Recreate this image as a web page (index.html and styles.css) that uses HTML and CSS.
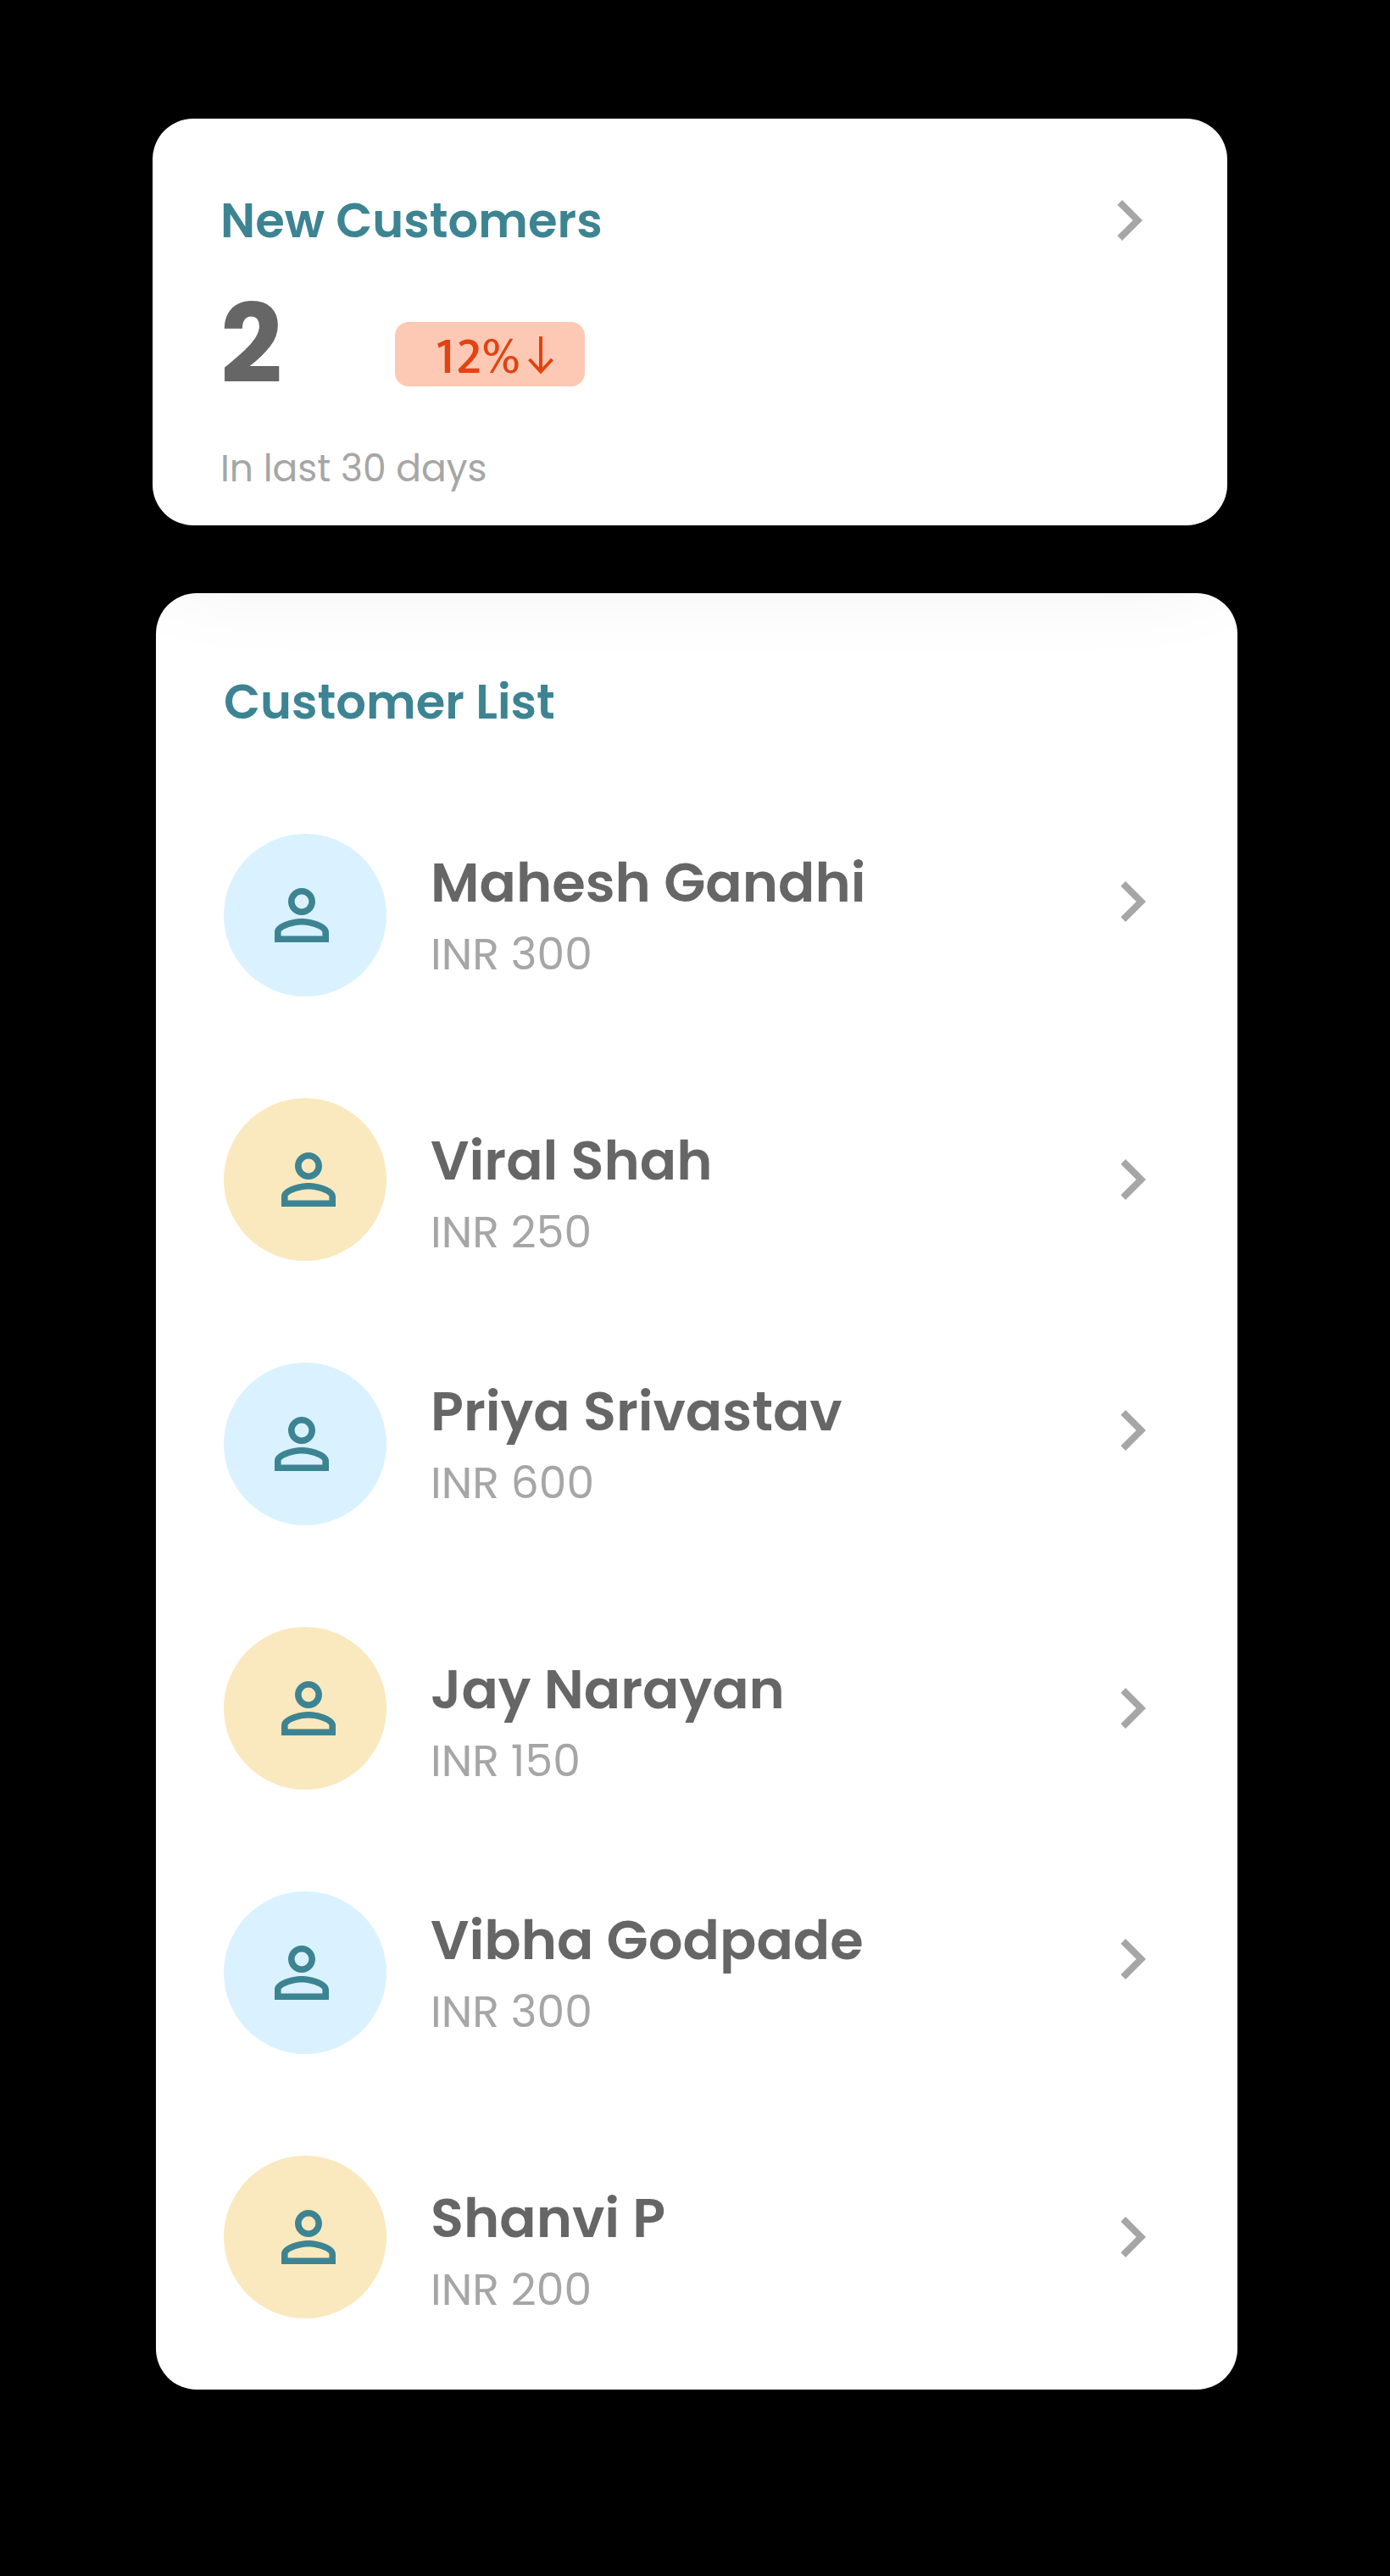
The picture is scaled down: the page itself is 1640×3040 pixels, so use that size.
FILE: index.html
```html
<!DOCTYPE html>
<html lang="en">
<head>
<meta charset="utf-8">
<title>Customers</title>
<link rel="stylesheet" href="styles.css">
</head>
<body>
<svg class="sprite" aria-hidden="true">
  <symbol id="chevron" viewBox="0 0 24 24"><path d="M10 6 8.59 7.41 13.17 12l-4.58 4.59L10 18l6-6z"/></symbol>
  <symbol id="person" viewBox="0 0 24 24"><path d="M12 5.9a2.1 2.1 0 1 1 0 4.2 2.1 2.1 0 0 1 0-4.2m0 9c2.97 0 6.1 1.46 6.1 2.1v1.1H5.9V17c0-.64 3.13-2.1 6.1-2.1M12 4C9.79 4 8 5.79 8 8s1.79 4 4 4 4-1.79 4-4-1.79-4-4-4zm0 9c-2.67 0-8 1.34-8 4v3h16v-3c0-2.66-5.33-4-8-4z"/></symbol>
</svg>
<main class="page">
  <section class="card summary">
    <header class="summary-header">
      <h2 class="title">New Customers</h2>
      <svg class="chevron"><use href="#chevron"/></svg>
    </header>
    <div class="summary-value">
      <span class="count">2</span>
      <span class="badge">
        <span class="badge-text">12<span class="badge-percent">%</span></span>
        <svg class="badge-arrow" viewBox="0 0 30 45"><path d="M15 0v42M1.500 27 15 41.500 28.500 27"/></svg>
      </span>
    </div>
    <p class="period">In last 30 days</p>
  </section>

  <section class="card customers">
    <h2 class="title">Customer List</h2>
    <ul class="list">
      <li class="row">
        <span class="avatar"><svg class="person"><use href="#person"/></svg></span>
        <div class="details"><div class="name">Mahesh Gandhi</div><div class="amount">INR 300</div></div>
        <svg class="chevron"><use href="#chevron"/></svg>
      </li>
      <li class="row row-alt">
        <span class="avatar"><svg class="person"><use href="#person"/></svg></span>
        <div class="details"><div class="name">Viral Shah</div><div class="amount">INR 250</div></div>
        <svg class="chevron"><use href="#chevron"/></svg>
      </li>
      <li class="row">
        <span class="avatar"><svg class="person"><use href="#person"/></svg></span>
        <div class="details"><div class="name">Priya Srivastav</div><div class="amount">INR 600</div></div>
        <svg class="chevron"><use href="#chevron"/></svg>
      </li>
      <li class="row row-alt">
        <span class="avatar"><svg class="person"><use href="#person"/></svg></span>
        <div class="details"><div class="name">Jay Narayan</div><div class="amount">INR 150</div></div>
        <svg class="chevron"><use href="#chevron"/></svg>
      </li>
      <li class="row">
        <span class="avatar"><svg class="person"><use href="#person"/></svg></span>
        <div class="details"><div class="name">Vibha Godpade</div><div class="amount">INR 300</div></div>
        <svg class="chevron"><use href="#chevron"/></svg>
      </li>
      <li class="row row-alt">
        <span class="avatar"><svg class="person"><use href="#person"/></svg></span>
        <div class="details"><div class="name">Shanvi P</div><div class="amount">INR 200</div></div>
        <svg class="chevron"><use href="#chevron"/></svg>
      </li>
    </ul>
  </section>
</main>
</body>
</html>
```
FILE: styles.css
```css
* { box-sizing: border-box; margin: 0; padding: 0; }

body {
  background: #000;
  font-family: Poppins, Inter, "Liberation Sans", sans-serif;
}

.sprite { display: none; }

.page {
  display: flex;
  flex-direction: column;
  gap: 80px;
  width: 1640px;
  height: 3040px;
  padding: 140px 180px 0;
}

.card { background: #fff; border-radius: 48px; }

.summary {
  position: relative;
  z-index: 1;
  width: 1268px;
  height: 480px;
  padding: 72px 68px 0 80px;
  box-shadow: 0 48px 120px rgba(0, 0, 0, 0.09);
}

.summary-header { display: flex; align-items: center; justify-content: space-between; }

.title { color: #3d8493; font-size: 56px; font-weight: 600; line-height: 86px; white-space: nowrap; }
.summary-header .title { padding-top: 1px; }

.chevron { flex: none; width: 96px; height: 96px; fill: #a6a6a6; }

.summary-value { display: flex; height: 144px; margin-top: 21px; }

.count {
  width: 206px;
  padding-top: 6px;
  color: #666;
  font-size: 128px;
  font-weight: 700;
  line-height: 144px;
}

.badge {
  display: flex;
  width: 224px;
  height: 76px;
  margin-top: 51px;
  padding: 0 37px 0 47px;
  border-radius: 16px;
  background: #fdc9b5;
  color: #e24310;
}
.badge-text {
  padding-top: 4px;
  font-family: Mukta, "Open Sans", sans-serif;
  font-size: 62px;
  font-weight: 500;
  line-height: 76px;
  white-space: nowrap;
}
.badge-percent { margin-left: 1px; font-size: 54px; line-height: 1; }
.badge-arrow {
  flex: none;
  width: 30px;
  height: 45px;
  margin: 17px 0 0 auto;
  fill: none;
  stroke: #e24310;
  stroke-width: 4;
}

.period { margin-top: 48px; color: #a6a6a6; font-size: 44px; line-height: 64px; }

.customers { width: 1276px; height: 2120px; margin-left: 4px; padding: 86px 76px 0 80px; }

.list { display: flex; flex-direction: column; gap: 120px; margin-top: 112px; list-style: none; }

.row { display: flex; align-items: flex-start; height: 192px; }

.avatar {
  display: flex;
  flex: none;
  align-items: center;
  justify-content: center;
  width: 192px;
  height: 192px;
  padding-right: 8px;
  border-radius: 50%;
  background: #daf2ff;
}
.row-alt .avatar { padding: 0 0 0 8px; background: #fae9be; }
.person { width: 96px; height: 96px; fill: #3d8493; }

.details { flex: 1; margin-left: 52px; padding-top: 12px; white-space: nowrap; }
.row-alt .details { padding-top: 28px; }
.name { color: #666; font-size: 64px; font-weight: 600; line-height: 92px; }
.amount { color: #a6a6a6; font-size: 52px; line-height: 76px; }

.row .chevron { margin-top: 32px; }
.row-alt .chevron { margin-top: 48px; }
```
